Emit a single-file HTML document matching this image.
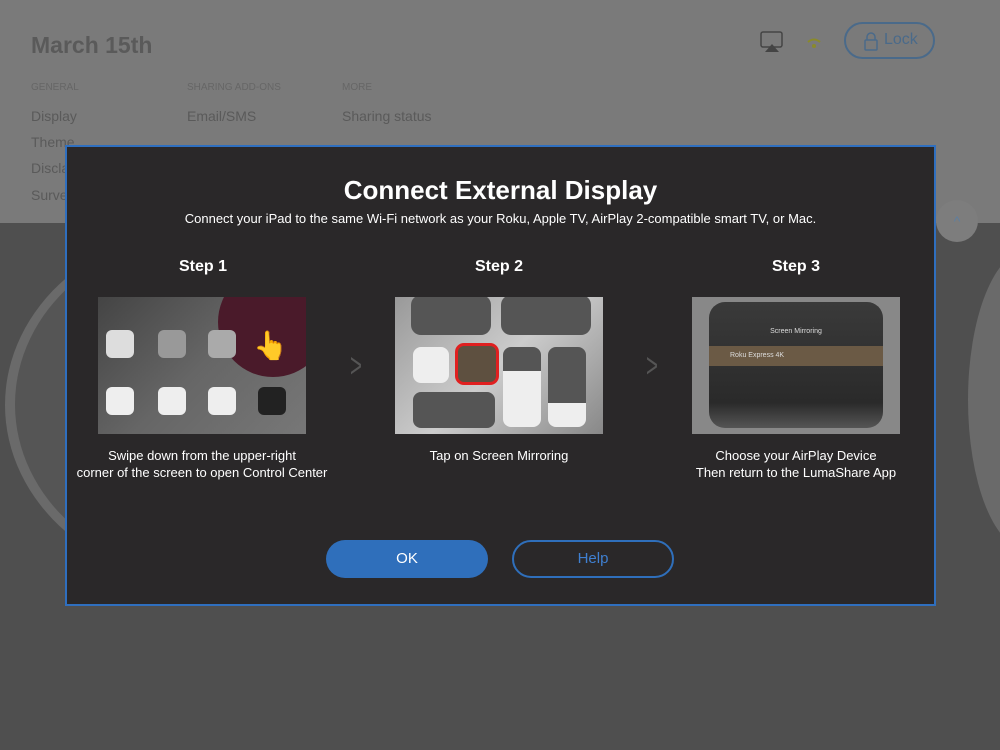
<!DOCTYPE html>
<html><head><meta charset="utf-8"><style>
*{margin:0;padding:0;box-sizing:border-box}
body{width:1000px;height:750px;overflow:hidden;position:relative;background:#4f4f4f;font-family:"Liberation Sans",sans-serif;}
.top{position:absolute;left:0;top:0;width:1000px;height:223px;background:#7a7a7a;}
.abs{position:absolute}
.g{color:#5a5a5a}
.modal{position:absolute;left:65px;top:145px;width:871px;height:461px;background:#2a2829;border:2px solid #2f6fbf;color:#fff;text-align:center}
.img{position:absolute;top:150px;width:208px;height:137px;overflow:hidden;background:linear-gradient(135deg,#8a8a8a,#5a5a5a 60%,#777)}
.cap{position:absolute;top:300px;width:300px;font-size:13px;line-height:17px}
.step{position:absolute;top:111px;width:200px;font-size:16px;font-weight:bold}
.chev{position:absolute;top:200px;font-size:34px;color:#555;transform:scaleX(.6)}
</style></head><body>
<div class="top"></div>
<div class="abs" style="left:5px;top:225px;width:420px;height:360px;border-radius:50%;background:#6a6a6a"></div>
<div class="abs" style="left:15px;top:232px;width:400px;height:345px;border-radius:50%;background:#555"></div>
<div class="abs" style="left:968px;top:250px;width:120px;height:300px;border-radius:50%;background:#6a6a6a"></div>
<div class="abs g" style="left:31px;top:32px;font-size:23px;font-weight:bold">March 15th</div>
<div class="abs" style="left:31px;top:82px;font-size:10px;color:#666">GENERAL</div>
<div class="abs" style="left:187px;top:82px;font-size:10px;color:#666">SHARING ADD-ONS</div>
<div class="abs" style="left:342px;top:82px;font-size:10px;color:#666">MORE</div>
<div class="abs g" style="left:31px;top:108px;font-size:14px">Display</div>
<div class="abs g" style="left:187px;top:108px;font-size:14px">Email/SMS</div>
<div class="abs g" style="left:342px;top:108px;font-size:14px">Sharing status</div>
<div class="abs g" style="left:31px;top:134px;font-size:14px">Theme</div>
<div class="abs g" style="left:31px;top:160px;font-size:14px">Discla</div>
<div class="abs g" style="left:31px;top:187px;font-size:14px">Survey</div>
<svg class="abs" style="left:760px;top:31px" width="24" height="22"><rect x="1" y="1" width="21" height="15" rx="2" fill="none" stroke="#444" stroke-width="1.5"/><polygon points="5,21 19,21 12,13" fill="#444"/></svg>
<svg class="abs" style="left:806px;top:37px" width="16" height="12"><path d="M2 5Q8 0 14 5" stroke="#8a8a2a" stroke-width="2" fill="none"/><circle cx="8" cy="9" r="2" fill="#8a8a2a"/></svg>
<div class="abs" style="left:844px;top:22px;width:91px;height:37px;border:2px solid #4a6a8a;border-radius:19px;color:#4a6a8a;font-size:16px;padding:7px 0 0 38px">Lock</div>
<svg class="abs" style="left:864px;top:31px" width="14" height="20"><path d="M3 9V6a4 4 0 0 1 8 0v3" fill="none" stroke="#4a6a8a" stroke-width="1.5"/><rect x="1" y="9" width="12" height="10" rx="1" fill="none" stroke="#4a6a8a" stroke-width="1.5"/></svg>
<div class="abs" style="left:936px;top:200px;width:42px;height:42px;border-radius:50%;background:#7d7d7d;color:#5f7f9f;text-align:center;font-size:14px;line-height:42px">^</div>
<div class="modal">
<div style="position:absolute;top:28px;width:100%;font-size:26px;font-weight:bold">Connect External Display</div>
<div style="position:absolute;top:64px;width:100%;font-size:13px">Connect your iPad to the same Wi-Fi network as your Roku, Apple TV, AirPlay 2-compatible smart TV, or Mac.</div>
<div class="step" style="left:36px">Step 1</div>
<div class="step" style="left:332px">Step 2</div>
<div class="step" style="left:629px">Step 3</div>
<div class="img" style="left:31px;background:linear-gradient(135deg,#444,#666 50%,#777)">
<div class="abs" style="left:120px;top:-30px;width:110px;height:110px;border-radius:50%;background:#4a1a2a"></div>
<div class="abs" style="left:155px;top:32px;font-size:28px">👆</div>
<div class="abs" style="left:8px;top:33px;width:28px;height:28px;border-radius:6px;background:#ddd"></div>
<div class="abs" style="left:60px;top:33px;width:28px;height:28px;border-radius:6px;background:#999"></div>
<div class="abs" style="left:110px;top:33px;width:28px;height:28px;border-radius:6px;background:#aaa"></div>
<div class="abs" style="left:8px;top:90px;width:28px;height:28px;border-radius:6px;background:#eee"></div>
<div class="abs" style="left:60px;top:90px;width:28px;height:28px;border-radius:6px;background:#eee"></div>
<div class="abs" style="left:110px;top:90px;width:28px;height:28px;border-radius:6px;background:#eee"></div>
<div class="abs" style="left:160px;top:90px;width:28px;height:28px;border-radius:6px;background:#222"></div>
</div>
<div class="chev" style="left:279px">&gt;</div>
<div class="img" style="left:328px;background:linear-gradient(135deg,#999,#ccc 50%,#888)">
<div class="abs" style="left:16px;top:-2px;width:80px;height:40px;border-radius:10px;background:#555"></div>
<div class="abs" style="left:106px;top:-2px;width:90px;height:40px;border-radius:10px;background:#555"></div>
<div class="abs" style="left:18px;top:50px;width:36px;height:36px;border-radius:8px;background:#eee"></div>
<div class="abs" style="left:60px;top:46px;width:44px;height:42px;border-radius:9px;background:#5e5040;border:3px solid #e02020"></div>
<div class="abs" style="left:108px;top:50px;width:38px;height:80px;border-radius:8px;background:linear-gradient(#555 30%,#eee 30%)"></div>
<div class="abs" style="left:153px;top:50px;width:38px;height:80px;border-radius:8px;background:linear-gradient(#555 70%,#eee 70%)"></div>
<div class="abs" style="left:18px;top:95px;width:82px;height:36px;border-radius:8px;background:#555"></div>
</div>
<div class="chev" style="left:575px">&gt;</div>
<div class="img" style="left:625px;background:#888">
<div class="abs" style="left:17px;top:5px;width:174px;height:126px;border-radius:16px;background:linear-gradient(#3a3a3a,#2a2a2a 80%,#555)"></div>
<div class="abs" style="left:17px;top:49px;width:174px;height:20px;background:#6b5a45"></div>
<div class="abs" style="left:0;top:31px;width:208px;font-size:7px;color:#ddd">Screen Mirroring</div>
<div class="abs" style="left:38px;top:55px;font-size:7px;color:#ddd">Roku Express 4K</div>
</div>
<div class="cap" style="left:-15px">Swipe down from the upper-right<br>corner of the screen to open Control Center</div>
<div class="cap" style="left:282px">Tap on Screen Mirroring</div>
<div class="cap" style="left:579px">Choose your AirPlay Device<br>Then return to the LumaShare App</div>
<div class="abs" style="left:259px;top:393px;width:162px;height:38px;border-radius:19px;background:#2f6fbb;font-size:15px;line-height:38px">OK</div>
<div class="abs" style="left:445px;top:393px;width:162px;height:38px;border-radius:19px;border:2px solid #2f6fbb;color:#3f7fd0;font-size:15px;line-height:34px">Help</div>
</div>
</body></html>
